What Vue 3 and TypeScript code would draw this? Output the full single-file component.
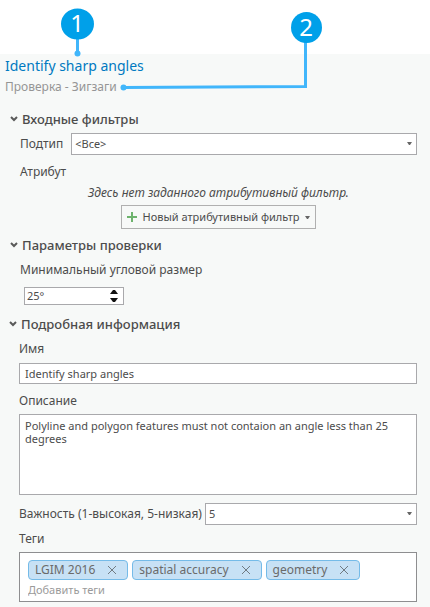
<script setup lang="ts">
import { reactive, ref } from 'vue'

const subtype = ref('<Все>')
const angle = ref(25)
const name = ref('Identify sharp angles')
const description = ref('Polyline and polygon features must not contaion an angle less than 25 degrees')
const severity = ref(5)
const tags = ref<string[]>(['LGIM 2016', 'spatial accuracy', 'geometry'])
const newTag = ref('')
const open = reactive({ filters: true, params: true, details: true })

function setAngle(event: Event): void {
  const value = parseFloat((event.target as HTMLInputElement).value)
  if (!Number.isNaN(value)) angle.value = value
}

function addTag(): void {
  const tag = newTag.value.trim()
  if (tag && !tags.value.includes(tag)) tags.value.push(tag)
  newTag.value = ''
}

function removeTag(tag: string): void {
  tags.value = tags.value.filter((item) => item !== tag)
}
</script>

<template>
  <main class="page">
    <svg class="callouts" width="340" height="96" viewBox="0 0 340 96" aria-hidden="true">
      <g stroke="#41b6fb" stroke-width="3" fill="none">
        <path d="M77.5 38V53" />
        <path d="M123 87.5L305.5 86.5V40" />
      </g>
      <circle cx="77.5" cy="53.5" r="3" fill="#41b6fb" />
      <circle cx="123.5" cy="87.5" r="3" fill="#41b6fb" />
      <ellipse cx="77.5" cy="24" rx="16.5" ry="15.5" fill="#00a0e9" />
      <circle cx="306.5" cy="27.5" r="15.5" fill="#00a0e9" />
      <text class="callout-number" x="77" y="32">1</text>
      <text class="callout-number" x="306" y="36">2</text>
    </svg>

    <form class="panel" @submit.prevent>
      <header class="header">
        <h1 class="title">{{ name }}</h1>
        <p class="subtitle">Проверка - Зигзаги</p>
      </header>

      <section>
        <h2 class="heading">
          <button type="button" class="toggle" :aria-expanded="open.filters" @click="open.filters = !open.filters">
            <svg class="chevron" width="8" height="6" viewBox="0 0 8 6"><path d="M1 1L4 4L7 1" /></svg>
            Входные фильтры
          </button>
        </h2>
        <div v-show="open.filters" class="body filters">
          <div class="row subtype-row">
            <label for="subtype">Подтип</label>
            <div class="select">
              <select id="subtype" v-model="subtype">
                <option>&lt;Все&gt;</option>
              </select>
              <svg class="caret" width="5" height="3" viewBox="0 0 5 3"><path d="M0 0H5L3 3H2Z" /></svg>
            </div>
          </div>
          <span class="label attribute">Атрибут</span>
          <p class="note">Здесь нет заданного атрибутивный фильтр.</p>
          <button type="button" class="new-filter">
            <svg width="10" height="10" viewBox="0 0 10 10"><path d="M5 0V10M0 5H10" stroke="#6db36d" stroke-width="2" /></svg>
            <span>Новый атрибутивный фильтр</span>
            <svg width="5" height="3" viewBox="0 0 5 3"><path d="M0 0H5L3 3H2Z" fill="#666" /></svg>
          </button>
        </div>
      </section>

      <section>
        <h2 class="heading">
          <button type="button" class="toggle" :aria-expanded="open.params" @click="open.params = !open.params">
            <svg class="chevron" width="8" height="6" viewBox="0 0 8 6"><path d="M1 1L4 4L7 1" /></svg>
            Параметры проверки
          </button>
        </h2>
        <div v-show="open.params" class="body params">
          <label class="label" for="angle">Минимальный угловой размер</label>
          <div class="spinner">
            <input id="angle" type="text" :value="`${angle}°`" @change="setAngle" />
            <div class="steps">
              <button type="button" aria-label="Увеличить" @click="angle++">
                <svg width="8" height="4" viewBox="0 0 8 4"><path d="M3 0H5L8 4H0Z" /></svg>
              </button>
              <button type="button" aria-label="Уменьшить" @click="angle--">
                <svg width="8" height="4" viewBox="0 0 8 4"><path d="M3 4H5L8 0H0Z" /></svg>
              </button>
            </div>
          </div>
        </div>
      </section>

      <section>
        <h2 class="heading details-heading">
          <button type="button" class="toggle" :aria-expanded="open.details" @click="open.details = !open.details">
            <svg class="chevron" width="8" height="6" viewBox="0 0 8 6"><path d="M1 1L4 4L7 1" /></svg>
            Подробная информация
          </button>
        </h2>
        <div v-show="open.details" class="body details">
          <label class="label" for="name">Имя</label>
          <input id="name" v-model="name" class="field" type="text" />
          <label class="label" for="description">Описание</label>
          <textarea id="description" v-model="description" class="field area" spellcheck="false"></textarea>
          <div class="row severity-row">
            <label for="severity">Важность (1-высокая, 5-низкая)</label>
            <div class="select">
              <select id="severity" v-model="severity">
                <option v-for="level in 5" :key="level" :value="level">{{ level }}</option>
              </select>
              <svg class="caret" width="5" height="3" viewBox="0 0 5 3"><path d="M0 0H5L3 3H2Z" /></svg>
            </div>
          </div>
          <label class="label tags-label" for="new-tag">Теги</label>
          <div class="tags">
            <ul class="chips">
              <li v-for="tag in tags" :key="tag" class="chip">
                {{ tag }}
                <button type="button" :aria-label="`Удалить ${tag}`" @click="removeTag(tag)">
                  <svg width="10" height="10" viewBox="0 0 10 10"><path d="M1 1L9 9M9 1L1 9" /></svg>
                </button>
              </li>
            </ul>
            <input id="new-tag" v-model="newTag" type="text" placeholder="Добавить теги" @keydown.enter.prevent="addTag" />
          </div>
        </div>
      </section>
    </form>
  </main>
</template>

<style>
body {
  background: #f7f9f8;
}
</style>

<style scoped>
*,
*::before,
*::after {
  box-sizing: border-box;
}

.page {
  position: relative;
  padding-top: 54px;
  background: #fff;
  color: #4c4c4c;
  font-family: "Noto Sans", "Open Sans", sans-serif;
  font-size: 12px;
  line-height: 16px;
}

.callouts {
  position: absolute;
  top: 0;
  left: 0;
  pointer-events: none;
}

.callout-number {
  fill: #fff;
  font-size: 24px;
  text-anchor: middle;
}

.panel {
  padding-bottom: 6px;
  background: #f7f9f8;
}

button,
input,
select,
textarea {
  margin: 0;
  color: inherit;
  font: inherit;
}

input,
select,
textarea,
.new-filter {
  font-size: 11px;
}

button {
  padding: 0;
  border: 0;
  background: none;
}

.header {
  padding: 2px 5px 0;
}

.title {
  margin: 0;
  color: #0079c1;
  font-size: 14px;
  font-weight: 400;
  line-height: 20px;
}

.subtitle {
  margin: 3px 0 0;
  color: #959595;
}

.heading {
  margin: 0;
  padding-left: 10px;
  font-size: 13px;
  font-weight: 500;
  line-height: 16px;
}

.header + section {
  padding-top: 16px;
}

.toggle {
  display: flex;
  align-items: center;
  gap: 4px;
}

.chevron {
  fill: none;
  stroke: #5a5a5a;
  stroke-width: 2;
}

.body {
  display: flex;
  flex-direction: column;
  align-items: stretch;
}

.filters {
  padding: 6px 13px 8px 20px;
}

.params {
  padding: 9px 13px 11px 20px;
}

.details {
  padding: 9px 13px 0 19px;
}

.row {
  display: flex;
  align-items: center;
}

.subtype-row {
  gap: 8px;
}

.select {
  position: relative;
  flex: 1;
}

.select select {
  display: block;
  width: 100%;
  height: 22px;
  padding: 0 16px 0 3px;
  border: 1px solid #a9a9ac;
  border-radius: 0;
  background: #fff;
  appearance: none;
}

.caret {
  position: absolute;
  top: 9px;
  right: 5px;
  fill: #666;
  pointer-events: none;
}

.attribute {
  margin-top: 9px;
}

.note {
  margin: 5px 0 4px;
  font-style: italic;
  text-align: center;
}

.new-filter {
  display: flex;
  align-self: center;
  align-items: center;
  gap: 6px;
  height: 24px;
  padding: 0 5px;
  border: 1px solid #b0b0b0;
}

.spinner {
  display: flex;
  width: 100px;
  height: 18px;
  margin: 9px 0 0 4px;
  border: 1px solid #a9a9ac;
  background: #fff;
}

.spinner input {
  flex: 1;
  min-width: 0;
  padding: 0 2px;
  border: 0;
  background: none;
}

.steps {
  display: flex;
  flex-direction: column;
  justify-content: center;
  gap: 4px;
  padding-right: 5px;
}

.steps svg {
  display: block;
  fill: #111;
}

.details-heading {
  padding-left: 9px;
}

.field {
  display: block;
  width: 100%;
  height: 21px;
  margin: 6px 0 9px;
  padding: 0 5px;
  border: 1px solid #a9a9ac;
  border-radius: 0;
  background: #fff;
}

.area {
  height: 81px;
  margin: 5px 0 8px;
  padding: 4px 5px;
  line-height: 13px;
  resize: none;
}

.severity-row {
  gap: 3px;
}

.tags-label {
  margin: 6px 0 5px;
}

.tags {
  padding: 7px 8px 3px;
  border: 1px solid #8e8e90;
  background: #fff;
}

.chips {
  display: flex;
  flex-wrap: wrap;
  gap: 4px;
  margin: 0;
  padding: 0;
  list-style: none;
}

.chip {
  display: flex;
  align-items: center;
  gap: 12px;
  height: 20px;
  padding: 0 10px 0 6px;
  border: 1px solid #75bbe8;
  border-radius: 4px;
  background: #c7e1f5;
  color: #6a6a6a;
}

.chip svg {
  display: block;
  fill: none;
  stroke: #717b82;
  stroke-width: 1;
}

.tags input {
  display: block;
  width: 100%;
  height: 18px;
  padding: 0;
  border: 0;
  background: none;
}

.tags input::placeholder {
  color: #9a9a9a;
  opacity: 1;
}
</style>
